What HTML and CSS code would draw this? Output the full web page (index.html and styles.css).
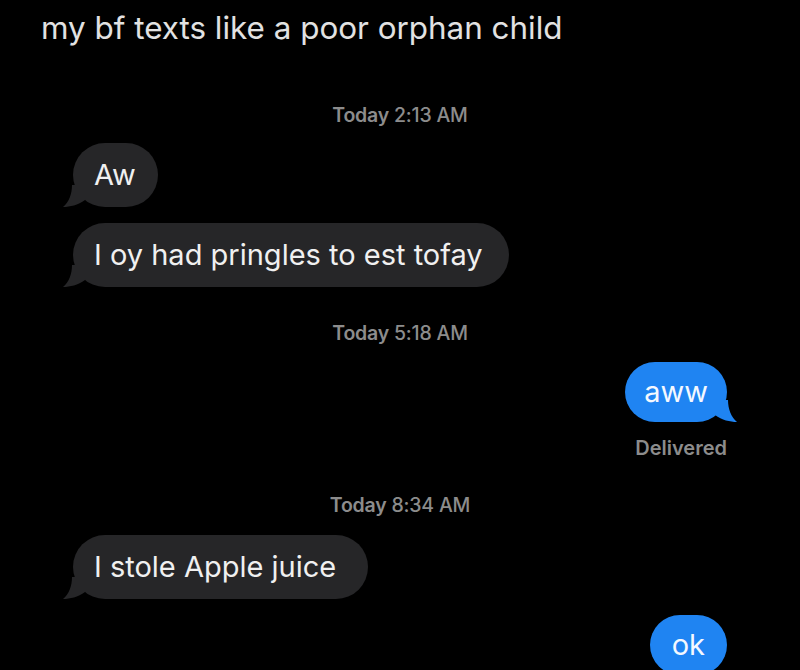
FILE: index.html
```html
<!DOCTYPE html>
<html>
<head>
<meta charset="utf-8">
<link rel="stylesheet" href="styles.css">
</head>
<body>
<div class="page">
  <div class="title">my bf texts like a poor orphan child</div>
  <div class="thread">
    <div class="stamp stamp-1"><b>Today</b> 2:13 AM</div>
    <div class="row in first">
      <div class="bubble gray">Aw<svg class="tail tail-l" viewBox="0 0 22 22" width="22" height="22"><path d="M22 0 L22 15 C15 20 7 22 0 22 C6 17 9 9 9 0 Z" fill="#262628"/></svg></div>
    </div>
    <div class="row in second">
      <div class="bubble gray wide">I oy had pringles to est tofay<svg class="tail tail-l" viewBox="0 0 22 22" width="22" height="22"><path d="M22 0 L22 15 C15 20 7 22 0 22 C6 17 9 9 9 0 Z" fill="#262628"/></svg></div>
    </div>
    <div class="stamp stamp-2"><b>Today</b> 5:18 AM</div>
    <div class="row out aww">
      <div class="bubble blue">aww<svg class="tail tail-r" viewBox="0 0 22 22" width="22" height="22"><path d="M0 0 L0 15 C7 20 15 22 22 22 C16 17 13 9 13 0 Z" fill="#1f84f2"/></svg></div>
    </div>
    <div class="delivered">Delivered</div>
    <div class="stamp stamp-3"><b>Today</b> 8:34 AM</div>
    <div class="row in juice">
      <div class="bubble gray juicy">I stole Apple juice<svg class="tail tail-l" viewBox="0 0 22 22" width="22" height="22"><path d="M22 0 L22 15 C15 20 7 22 0 22 C6 17 9 9 9 0 Z" fill="#262628"/></svg></div>
    </div>
    <div class="row out last">
      <div class="bubble blue ok">ok</div>
    </div>
  </div>
</div>
</body>
</html>
```
FILE: styles.css
```css
html, body {
  margin: 0;
  padding: 0;
  background: #000;
}
.page {
  width: 800px;
  height: 670px;
  overflow: hidden;
  background: #000;
  font-family: Inter, "Liberation Sans", sans-serif;
  color: #ececec;
}
.title {
  padding: 8px 0 0 41px;
  font-size: 31.4px;
  line-height: 40px;
  color: #e2e2e2;
}
.thread {
  display: flex;
  flex-direction: column;
  padding: 0 73px;
}
.stamp {
  text-align: center;
  font-size: 19.5px;
  line-height: 22px;
  color: #8c8c8c;
  font-weight: 500;
  letter-spacing: -0.2px;
}
.stamp b {
  font-weight: 600;
}
.stamp-1 { margin-top: 56px; }
.stamp-2 { margin-top: 35px; }
.stamp-3 { margin-top: 35px; }
.row {
  display: flex;
}
.row.in { justify-content: flex-start; }
.row.out { justify-content: flex-end; }
.row.first { margin-top: 17px; }
.row.second { margin-top: 16px; }
.row.aww { margin-top: 18px; }
.row.juice { margin-top: 19px; }
.row.last { margin-top: 16px; }
.bubble {
  position: relative;
  font-size: 29px;
  line-height: 32px;
  padding: 16px 22px 16px 21px;
  border-radius: 32px;
  color: #f0f0f0;
}
.wide { padding-right: 26px; }
.juicy { padding-right: 32px; }
.gray { background: #262628; }
.blue {
  background: #1f84f2;
  color: #f4f8ff;
  padding: 14px 19px;
  border-radius: 30px;
}
.ok { padding: 14px 22px; }
.tail {
  position: absolute;
  bottom: 0;
}
.tail-l { left: -10px; }
.tail-r { right: -10px; }
.delivered {
  align-self: flex-end;
  margin-top: 15px;
  font-size: 20px;
  line-height: 22px;
  font-weight: 600;
  color: #8c8c8c;
}
```
